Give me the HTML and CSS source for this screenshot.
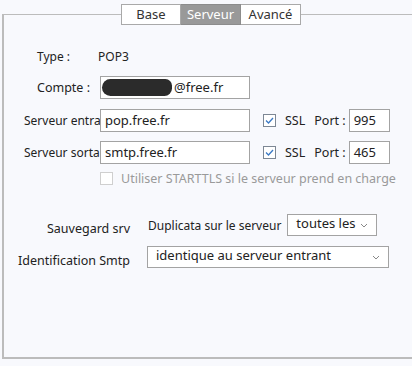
FILE: index.html
```html
<!DOCTYPE html>
<html lang="fr">
<head>
  <meta charset="UTF-8" />
  <title>Compte - Serveur</title>
  <link rel="stylesheet" href="styles.css">
</head>
<body>
  <div class="tabs">
    <span class="tab">Base</span>
    <span class="tab active">Serveur</span>
    <span class="tab">Avancé</span>
  </div>

  <div class="panel">
    <!-- type -->
    <div class="row row-type">
      <span class="lbl lbl-type">Type :</span>
      <span class="val">POP3</span>
    </div>

    <!-- compte -->
    <div class="row row-input">
      <span class="lbl lbl-compte">Compte :</span>
      <div class="field wide"><span class="blob"></span>@free.fr</div>
    </div>

    <!-- serveurs -->
    <div class="row row-input">
      <span class="lbl lbl-srv">Serveur entrant</span>
      <div class="field wide">pop.free.fr</div>
      <span class="check on"><svg viewBox="0 0 13 13" width="13" height="13"><path d="M3 6.5l2.5 2.5 4.5-5" fill="none" stroke="#3b79c4" stroke-width="1.3"/></svg></span>
      <span class="ssl">SSL</span>
      <span class="port">Port :</span>
      <div class="field small">995</div>
    </div>
    <div class="row row-input">
      <span class="lbl lbl-srv">Serveur sortant</span>
      <div class="field wide">smtp.free.fr</div>
      <span class="check on"><svg viewBox="0 0 13 13" width="13" height="13"><path d="M3 6.5l2.5 2.5 4.5-5" fill="none" stroke="#3b79c4" stroke-width="1.3"/></svg></span>
      <span class="ssl">SSL</span>
      <span class="port">Port :</span>
      <div class="field small">465</div>
    </div>

    <div class="row row-tls">
      <span class="check off"></span>
      <span class="tls">Utiliser STARTTLS si le serveur prend en charge</span>
    </div>

    <!-- options -->
    <div class="row row-save">
      <span class="lbl2">Sauvegard srv</span>
      <span class="dup">Duplicata sur le serveur</span>
      <div class="select sel-small">toutes les <svg viewBox="0 0 8 5" width="8" height="5"><path d="M1 1l3 3 3-3" fill="none" stroke="#888" stroke-width="1"/></svg></div>
    </div>
    <div class="row row-smtp">
      <span class="lbl2">Identification Smtp</span>
      <div class="select sel-wide">identique au serveur entrant <svg viewBox="0 0 8 5" width="8" height="5"><path d="M1 1l3 3 3-3" fill="none" stroke="#888" stroke-width="1"/></svg></div>
    </div>
  </div>
</body>
</html>
```

FILE: styles.css
```css
*{box-sizing:border-box;margin:0;padding:0}
html,body{height:100%}
body{font-family:"Noto Sans",sans-serif;font-size:12px;color:#222;background:#f8f9fd;overflow:hidden}

/* tabs sit on the panel's top border */
.tabs{display:flex;padding:4px 0 0 121px;position:relative;z-index:1;margin-bottom:-11px}
.tab{height:21px;width:60px;border:1px solid #a9a9a9;background:#fff;text-align:center;
     line-height:19px;font-size:13px;color:#333}
.tab+.tab{border-left:none}
.tab.active{background:#999;color:#fff;border-color:#8c8c8c}

.panel{margin-left:2px;height:345px;border:1px solid #bcbcbc;border-right:none;
       border-left-width:2px;border-bottom-width:2px;padding-top:32px}

.row{display:flex;align-items:center}
.row-type{height:18px}
.row-input{height:23px;margin-top:10px}
.row-input:nth-child(2){margin-top:11px}
.row-input:nth-child(4){margin-top:9px}

.lbl{width:96px;white-space:nowrap;overflow:hidden;font-size:12.5px;flex:none}
.lbl-type{padding-left:33px;width:94px;font-size:12px}
.lbl-compte{padding-left:33px}
.lbl-srv{padding-left:20px;font-size:12px}
.val{font-size:12px}

.field{height:23px;border:1px solid #a3a3a3;background:#fff;font-size:13px;
       line-height:21px;padding-left:4px;display:flex;align-items:center}
.field.wide{width:150px}
.field.small{width:41px}
.blob{display:inline-block;width:70px;height:17px;background:#2b2b2b;border-radius:9px 7px 8px 9px;margin-left:-3px;margin-right:2px}

.check{width:13px;height:13px;border:1px solid #7d8794;background:#fff;display:inline-block;flex:none}
.check svg{display:block;margin:-1px}
.row-input .check{margin-left:13px}
.check.off{border-color:#cfcfcf}
.ssl{margin-left:9px;font-size:12.5px}
.port{margin-left:9px;margin-right:3px;font-size:12.5px}

.row-tls{height:18px;margin-top:5px;padding-left:96px}
.tls{margin-left:8px;color:#9a9a9a;font-size:12.5px}

.row-save{height:22px;margin-top:27px}
.row-smtp{height:22px;margin-top:10px}
.lbl2{width:126px;text-align:right;font-size:12.5px;padding-top:6px}
.dup{margin-left:18px;font-size:12px}
.select{height:22px;border:1px solid #a3a3a3;background:#fff;font-size:13px;
        display:flex;align-items:center;justify-content:space-between;padding:0 8px 0 8px}
.sel-small{width:90px;margin-left:6px;padding-bottom:4px}
.sel-wide{width:242px;margin-left:17px;padding-bottom:4px}
.select svg{margin-top:4px}
```
